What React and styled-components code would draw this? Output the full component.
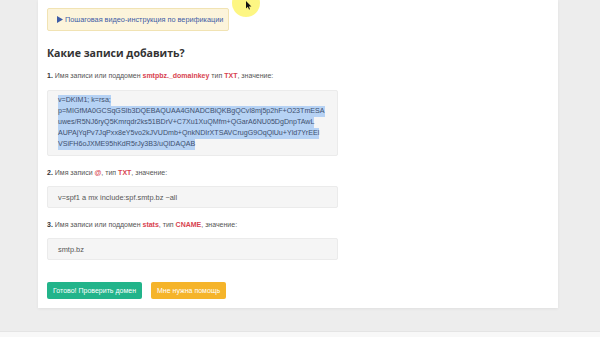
import React from "react";
import styled, { createGlobalStyle } from "styled-components";

const GlobalStyle = createGlobalStyle`
  html, body {
    margin: 0;
    padding: 0;
    background: #ededed;
  }
  body {
    font-family: "Liberation Sans", Arial, sans-serif;
  }
`;

const Page = styled.div`
  position: relative;
  width: 600px;
  height: 337px;
  overflow: hidden;
  display: flex;
  flex-direction: column;
  background: #ededed;
`;

const Card = styled.div`
  margin-left: 38px;
  width: 520px;
  height: 308px;
  box-sizing: border-box;
  padding: 8px 9px 9px;
  background: #fff;
  box-shadow: 0 1px 3px rgba(0, 0, 0, 0.06);
  display: flex;
  flex-direction: column;
  align-items: flex-start;
`;

const Notice = styled.div`
  box-sizing: border-box;
  width: 182px;
  height: 23px;
  padding: 0 9px;
  display: flex;
  align-items: center;
  gap: 2px;
  background: #fcf4db;
  border: 1px solid #f1e3b3;
  border-radius: 2px;
  color: #3e5ca6;
  font-size: 7.3px;
  white-space: nowrap;
`;

const Play = styled.svg`
  flex: none;
`;

const Heading = styled.h3`
  margin: 15px 0 0;
  font-family: "Open Sans", "Liberation Sans", sans-serif;
  font-weight: 700;
  font-size: 10.6px;
  line-height: 14px;
  color: #333;
`;

const Label = styled.div`
  margin-top: ${(p) => p.$top}px;
  font-size: 7px;
  line-height: 10px;
  color: #555;
  white-space: nowrap;
  b {
    color: #333;
  }
`;

const Mark = styled.span`
  color: #d8434f;
  font-weight: 700;
`;

const CodeBox = styled.div`
  box-sizing: border-box;
  margin-top: ${(p) => p.$top}px;
  width: 291px;
  min-height: 22px;
  padding: ${(p) => (p.$multi ? "5px 10px 5px" : "0 10px")};
  display: flex;
  flex-direction: column;
  justify-content: center;
  background: #f5f5f5;
  border: 1px solid #ebebeb;
  border-radius: 2px;
  color: #555;
  font-size: ${(p) => (p.$multi ? 7.1 : 7.4)}px;
  line-height: 11px;
`;

const Sel = styled.span`
  align-self: flex-start;
  background: #b6d2f4;
  color: #40506e;
  line-height: 11px;
  white-space: nowrap;
`;

const Actions = styled.div`
  margin-top: 22px;
  display: flex;
  gap: 9px;
`;

const Button = styled.button`
  height: 17px;
  padding: 0 6px;
  border: none;
  border-radius: 2px;
  background: ${(p) => (p.$warn ? "#f5b42a" : "#22b48a")};
  color: #fff;
  font-family: "Liberation Sans", Arial, sans-serif;
  font-size: 7px;
  cursor: pointer;
`;

const Footer = styled.div`
  margin-top: 23px;
  flex: 1;
  background: #f8f8f8;
  border-top: 1px solid #e4e4e4;
`;

const Cursor = styled.div`
  position: absolute;
  left: 232px;
  top: -11px;
  width: 28px;
  height: 28px;
  border-radius: 50%;
  background: rgba(252, 244, 100, 0.8);
  svg {
    position: absolute;
    left: 14px;
    top: 12px;
  }
`;

const dkim = [
  "v=DKIM1; k=rsa;",
  "p=MIGfMA0GCSqGSIb3DQEBAQUAA4GNADCBiQKBgQCvl8mj5p2hF+O23TmESA",
  "uwes/R5NJ6ryQ5Kmrqdr2ks51BDrV+C7Xu1XuQMfm+QGarA6NU05DgDnpTAwL",
  "AUPAjYqPv7JqPxx8eY5vo2kJVUDmb+QnkNDIrXTSAVCrugG9OqQlUu+Yld7YrEEl",
  "VSiFH6oJXME95hKdR5rJy3B3/uQIDAQAB",
];

const App = () => {
  return (
    <Page>
      <GlobalStyle />
      <Card>
        <Notice>
          <Play width="6" height="7" viewBox="0 0 6 7">
            <path d="M0 0 L6 3.5 L0 7 Z" fill="#3e5ca6" />
          </Play>
          <span>Пошаговая видео-инструкция по верификации</span>
        </Notice>
        <Heading>Какие записи добавить?</Heading>
        <Label $top={11}>
          <b>1.</b> Имя записи или поддомен <Mark>smtpbz._domainkey</Mark> тип{" "}
          <Mark>TXT</Mark>, значение:
        </Label>
        <CodeBox $top={9} $multi>
          {dkim.map((line) => (
            <Sel key={line}>{line}</Sel>
          ))}
        </CodeBox>
        <Label $top={12}>
          <b>2.</b> Имя записи <Mark>@</Mark>, тип <Mark>TXT</Mark>, значение:
        </Label>
        <CodeBox $top={8}>v=spf1 a mx include:spf.smtp.bz ~all</CodeBox>
        <Label $top={12}>
          <b>3.</b> Имя записи или поддомен <Mark>stats</Mark>, тип{" "}
          <Mark>CNAME</Mark>, значение:
        </Label>
        <CodeBox $top={8}>smtp.bz</CodeBox>
        <Actions>
          <Button>Готово! Проверить домен</Button>
          <Button $warn>Мне нужна помощь</Button>
        </Actions>
      </Card>
      <Footer />
      <Cursor>
        <svg width="6" height="9" viewBox="0 0 6 9">
          <path d="M0 0 L0 7.5 L1.8 5.8 L3 8.6 L4 8.2 L2.9 5.5 L5.4 5.5 Z" fill="#111" />
        </svg>
      </Cursor>
    </Page>
  );
};

export default App;
